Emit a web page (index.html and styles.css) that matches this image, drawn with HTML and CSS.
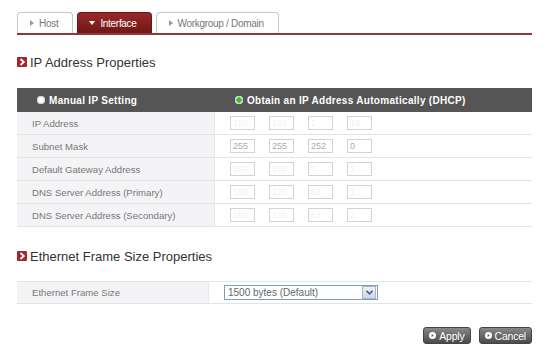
FILE: index.html
```html
<!DOCTYPE html>
<html lang="en">
<head>
    <meta charset="UTF-8">
    <title>Interface Settings</title>
    <link rel="stylesheet" href="styles.css">
</head>
<body>
<div class="page">

    <!-- Tabs -->
    <div class="tabs">
        <div class="tab">
            <svg class="tab-arrow" width="4" height="6" viewBox="0 0 4 6"><path d="M0 0 L4 3 L0 6 Z" fill="#999"/></svg>
            Host
        </div>
        <div class="tab tab-active">
            <svg class="tab-arrow" width="6" height="4" viewBox="0 0 6 4"><path d="M0 0 L6 0 L3 4 Z" fill="#fff"/></svg>
            Interface
        </div>
        <div class="tab">
            <svg class="tab-arrow" width="4" height="6" viewBox="0 0 4 6"><path d="M0 0 L4 3 L0 6 Z" fill="#999"/></svg>
            Workgroup / Domain
        </div>
    </div>

    <!-- IP Address -->
    <h3 class="section-title">
        <svg class="title-icon" width="10" height="10" viewBox="0 0 10 10"><rect width="10" height="10" rx="1" fill="#a3262a"/><path d="M3.5 2 L6.8 5 L3.5 8" stroke="#fff" stroke-width="1.8" fill="none"/></svg>
        IP Address Properties
    </h3>

    <div class="prop-table">
        <div class="prop-head">
            <div class="head-cell">
                <span class="radio"></span>Manual IP Setting
            </div>
            <div class="head-cell">
                <span class="radio radio-on"></span>Obtain an IP Address Automatically (DHCP)
            </div>
        </div>
        <div class="prop-row">
            <div class="prop-label">IP Address</div>
            <div class="prop-value">
                <span class="ip-box faint">192</span><span class="ip-box faint">168</span><span class="ip-box faint">1</span><span class="ip-box faint">10</span>
            </div>
        </div>
        <div class="prop-row">
            <div class="prop-label">Subnet Mask</div>
            <div class="prop-value">
                <span class="ip-box">255</span><span class="ip-box">255</span><span class="ip-box">252</span><span class="ip-box">0</span>
            </div>
        </div>
        <div class="prop-row">
            <div class="prop-label">Default Gateway Address</div>
            <div class="prop-value">
                <span class="ip-box faint">192</span><span class="ip-box faint">168</span><span class="ip-box faint">1</span><span class="ip-box faint">1</span>
            </div>
        </div>
        <div class="prop-row">
            <div class="prop-label">DNS Server Address (Primary)</div>
            <div class="prop-value">
                <span class="ip-box faint">168</span><span class="ip-box faint">126</span><span class="ip-box faint">63</span><span class="ip-box faint">1</span>
            </div>
        </div>
        <div class="prop-row">
            <div class="prop-label">DNS Server Address (Secondary)</div>
            <div class="prop-value">
                <span class="ip-box faint">168</span><span class="ip-box faint">126</span><span class="ip-box faint">63</span><span class="ip-box faint">2</span>
            </div>
        </div>
    </div>

    <!-- Ethernet frame -->
    <h3 class="section-title section-title-2">
        <svg class="title-icon" width="10" height="10" viewBox="0 0 10 10"><rect width="10" height="10" rx="1" fill="#a3262a"/><path d="M3.5 2 L6.8 5 L3.5 8" stroke="#fff" stroke-width="1.8" fill="none"/></svg>
        Ethernet Frame Size Properties
    </h3>

    <div class="prop-table frame-table">
        <div class="prop-row">
            <div class="prop-label">Ethernet Frame Size</div>
            <div class="prop-value">
                <div class="select">
                    <span class="select-text">1500 bytes (Default)</span>
                    <span class="select-btn">
                        <svg width="7" height="5" viewBox="0 0 7 5"><path d="M0.5 0.8 L3.5 3.8 L6.5 0.8" stroke="#4d6185" stroke-width="1.6" fill="none"/></svg>
                    </span>
                </div>
            </div>
        </div>
    </div>

    <!-- Buttons -->
    <div class="actions">
        <button class="btn">
            <svg width="7" height="7" viewBox="0 0 7 7"><circle cx="3.5" cy="3.5" r="3.5" fill="#fff"/><path d="M2.7 2 L4.7 3.5 L2.7 5 Z" fill="#555"/></svg>
            Apply
        </button>
        <button class="btn">
            <svg width="7" height="7" viewBox="0 0 7 7"><circle cx="3.5" cy="3.5" r="3.5" fill="#fff"/><path d="M2.7 2 L4.7 3.5 L2.7 5 Z" fill="#555"/></svg>
            Cancel
        </button>
    </div>

</div>
</body>
</html>
```

FILE: styles.css
```css
body {
    margin: 0;
    background: #fff;
    font-family: "Liberation Sans", Arial, sans-serif;
}

.page {
    padding: 12px 18px 0 17px;
}

/* Tabs */
.tabs {
    display: flex;
    gap: 4px;
    border-bottom: 2px solid #8c3a3a;
}

.tab {
    display: flex;
    align-items: center;
    gap: 5px;
    height: 21px;
    box-sizing: border-box;
    padding: 0 14px 0 12px;
    border: 1px solid #c8c8c8;
    border-bottom: none;
    border-radius: 4px 4px 0 0;
    background: #fff;
    color: #777;
    font-size: 10px;
    letter-spacing: -0.3px;
}

.tab-active {
    border-color: #6e1414;
    background: linear-gradient(#9a2a2a, #6f1616);
    color: #fff;
    padding: 0 14px 0 11px;
}

/* Section titles */
.section-title {
    display: flex;
    align-items: center;
    gap: 3px;
    height: 16px;
    margin: 19px 0 18px;
    font-size: 13px;
    font-weight: normal;
    color: #333;
}

.section-title-2 {
    margin: 21px 0 17px;
}

/* Property tables */
.prop-head {
    display: grid;
    grid-template-columns: 198px 1fr;
    height: 24px;
    background: #555;
}

.head-cell {
    display: flex;
    align-items: center;
    gap: 4px;
    padding-left: 20px;
    color: #fff;
    font-size: 10px;
    font-weight: bold;
    letter-spacing: 0.3px;
}

.radio {
    width: 8px;
    height: 8px;
    border-radius: 50%;
    background: #fff;
    box-shadow: inset 0 0 0 1px #ccc;
}

.radio-on {
    background: radial-gradient(circle, #3ec01e 0 2.5px, #fff 3px);
}

.prop-row {
    display: grid;
    grid-template-columns: 198px 1fr;
    height: 23px;
    box-sizing: border-box;
    border-bottom: 1px solid #e4e4e4;
}

.prop-label {
    display: flex;
    align-items: center;
    padding-left: 15px;
    background: #f4f4f6;
    border-right: 1px solid #e8e8e8;
    color: #777;
    font-size: 9.6px;
}

.prop-value {
    display: flex;
    align-items: center;
    gap: 14px;
    padding-left: 15px;
}

.ip-box {
    width: 25px;
    height: 14px;
    box-sizing: border-box;
    border: 1px solid #d2d2d2;
    padding-left: 2px;
    color: #aaa;
    font-size: 9px;
    line-height: 12px;
}

.ip-box.faint {
    color: #f2f2f2;
}

/* Ethernet frame table */
.frame-table {
    border-top: 1px solid #e4e4e4;
}

.frame-table .prop-row {
    grid-template-columns: 192px 1fr;
    height: 22px;
}

.select {
    display: flex;
    align-items: center;
    justify-content: space-between;
    width: 154px;
    height: 15px;
    box-sizing: border-box;
    border: 1px solid #7f9db9;
    background: #fff;
}

.select-text {
    padding-left: 3px;
    color: #666;
    font-size: 10px;
}

.select-btn {
    display: flex;
    align-items: center;
    justify-content: center;
    width: 12px;
    height: 11px;
    margin-right: 1px;
    border: 1px solid #a9b6c8;
    background: linear-gradient(#eef1f6, #cfd6e2);
}

/* Buttons */
.actions {
    display: flex;
    justify-content: flex-end;
    gap: 8px;
    margin-top: 23px;
}

.btn {
    display: flex;
    align-items: center;
    gap: 3px;
    height: 17px;
    padding: 0 5px;
    border: 1px solid #444;
    border-radius: 3px;
    background: linear-gradient(#888, #4a4a4a);
    color: #fff;
    font-family: "Liberation Sans", Arial, sans-serif;
    font-size: 10.5px;
    letter-spacing: -0.2px;
}
```
